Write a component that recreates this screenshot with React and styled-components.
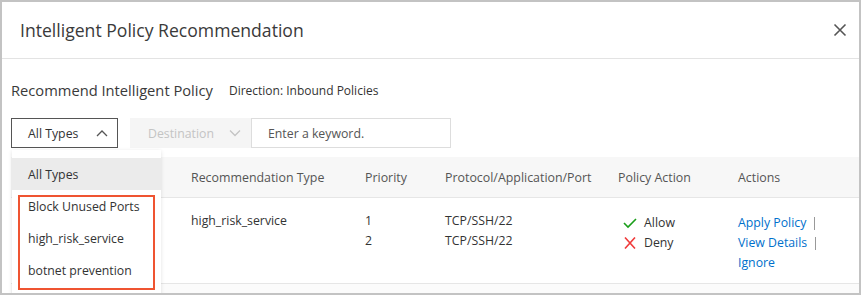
import React from "react";
import styled, { createGlobalStyle } from "styled-components";

const GlobalStyle = createGlobalStyle`
  html, body { margin: 0; padding: 0; background: #fff; }
  body { font-family: "Open Sans", "Noto Sans", Arial, sans-serif; color: #333; }
  * { box-sizing: border-box; }
`;

const Frame = styled.div`
  width: 861px;
  height: 295px;
  border: 2px solid #c3c3c3;
  background: #fff;
  overflow: hidden;
  display: flex;
  flex-direction: column;
`;

const Header = styled.div`
  height: 57px;
  flex: none;
  display: flex;
  align-items: center;
  justify-content: space-between;
  padding: 0 11px 0 18px;
  border-bottom: 1px solid #e3e3e3;
`;

const Title = styled.h1`
  margin: 0;
  font-size: 17.6px;
  font-weight: 400;
  color: #3a3a3a;
`;

const CloseBtn = styled.button`
  width: 16px;
  height: 16px;
  padding: 0;
  border: 0;
  background: none;
  display: flex;
  align-items: center;
  justify-content: center;
`;

const Body = styled.div`
  padding: 21px 0 0 9px;
  display: flex;
  flex-direction: column;
`;

const SectionRow = styled.div`
  display: flex;
  align-items: center;
  gap: 16px;
  height: 20px;
`;

const SectionTitle = styled.span`
  font-size: 14.7px;
  color: #3a3a3a;
`;

const SectionNote = styled.span`
  font-size: 12px;
  color: #333;
`;

const FilterRow = styled.div`
  display: flex;
  align-items: stretch;
  height: 30px;
  margin-top: 18px;
`;

const SelectWrap = styled.div`
  position: relative;
  display: flex;
`;

const Select = styled.div`
  width: ${(p) => p.$w}px;
  height: 30px;
  display: flex;
  align-items: center;
  justify-content: space-between;
  padding: 0 9px 0 ${(p) => p.$pl}px;
  font-size: 12.3px;
  border: 1px solid ${(p) => (p.$disabled ? "#f5f5f5" : "#555")};
  background: ${(p) => (p.$disabled ? "#f5f5f5" : "#fff")};
  color: ${(p) => (p.$disabled ? "#c4c4c4" : "#333")};
  margin-left: ${(p) => p.$ml || 0}px;
`;

const Input = styled.div`
  width: 200px;
  height: 30px;
  border: 1px solid #ddd;
  display: flex;
  align-items: center;
  padding-left: 16px;
  font-size: 12.3px;
  color: #555;
`;

const Menu = styled.div`
  position: absolute;
  top: 32px;
  left: 1px;
  width: 149px;
  height: 160px;
  background: #fff;
  box-shadow: 0 1px 4px rgba(0, 0, 0, 0.12);
  padding-top: 8px;
  z-index: 5;
`;

const MenuItem = styled.div`
  height: 32px;
  display: flex;
  align-items: center;
  padding-left: 16px;
  font-size: 12.3px;
  color: #333;
  background: ${(p) => (p.$active ? "#ebebeb" : "#fff")};
`;

const Highlight = styled.div`
  position: absolute;
  left: 6px;
  top: 45px;
  width: 137px;
  height: 95px;
  border: 2px solid #ef5431;
  pointer-events: none;
`;

const Table = styled.div`
  margin-top: 9px;
  display: flex;
  flex-direction: column;
`;

const cols = "164px 174px 80px 173px 120px 1fr";

const HeadRow = styled.div`
  display: grid;
  grid-template-columns: ${cols};
  height: 41px;
  background: #f7f7f7;
  border-bottom: 1px solid #e6e6e6;
  align-items: center;
`;

const HeadCell = styled.div`
  padding-left: 16px;
  font-size: 12.4px;
  color: #555;
`;

const DataRow = styled.div`
  display: grid;
  grid-template-columns: ${cols};
  height: 86px;
  border-bottom: 1px solid #e6e6e6;
  padding-top: 13px;
`;

const Cell = styled.div`
  padding-left: 16px;
  font-size: 12.3px;
  color: #333;
  display: flex;
  flex-direction: column;
  padding-top: ${(p) => p.$pt || 0}px;
`;

const Line = styled.div`
  height: 20px;
  line-height: 20px;
  display: flex;
  align-items: center;
  white-space: nowrap;
`;

const ActionLine = styled(Line)`
  gap: 7px;
  padding-left: 5px;
`;

const LinkLine = styled(Line)`
  gap: 8px;
`;

const Link = styled.a`
  color: #0070cc;
  text-decoration: none;
  font-size: 12.3px;
`;

const Sep = styled.span`
  width: 1px;
  height: 13px;
  background: #999;
`;

const NextRow = styled.div`
  height: 12px;
  background: #fbfbfb;
`;

const Chevron = ({ up, color }) => (
  <svg width="12" height="8" viewBox="0 0 12 8">
    <polyline
      points={up ? "1,7 6,2 11,7" : "1,1.5 6,6.5 11,1.5"}
      fill="none"
      stroke={color}
      strokeWidth="1.3"
    />
  </svg>
);

const CheckIcon = () => (
  <svg width="14" height="12" viewBox="0 0 14 12">
    <polyline points="1,6 5,10 13,2" fill="none" stroke="#1a9e1a" strokeWidth="1.6" />
  </svg>
);

const CrossIcon = () => (
  <svg width="14" height="12" viewBox="0 0 14 12">
    <path d="M2 0.5 L12 11.5 M12 0.5 L2 11.5" stroke="#f03b3b" strokeWidth="1.6" fill="none" />
  </svg>
);

export default function App() {
  return (
    <>
      <GlobalStyle />
      <Frame>
        <Header>
          <Title>Intelligent Policy Recommendation</Title>
          <CloseBtn aria-label="close">
            <svg width="14" height="14" viewBox="0 0 14 14">
              <path d="M1.5 1.5 L12.5 12.5 M12.5 1.5 L1.5 12.5" stroke="#555" strokeWidth="1.6" />
            </svg>
          </CloseBtn>
        </Header>
        <Body>
          <SectionRow>
            <SectionTitle>Recommend Intelligent Policy</SectionTitle>
            <SectionNote>Direction: Inbound Policies</SectionNote>
          </SectionRow>
          <FilterRow>
            <SelectWrap>
              <Select $w={107} $pl={16}>
                All Types
                <Chevron up color="#555" />
              </Select>
              <Menu>
                <MenuItem $active>All Types</MenuItem>
                <MenuItem>Block Unused Ports</MenuItem>
                <MenuItem>high_risk_service</MenuItem>
                <MenuItem>botnet prevention</MenuItem>
                <Highlight />
              </Menu>
            </SelectWrap>
            <Select $w={121} $pl={17} $ml={12} $disabled>
              Destination
              <Chevron color="#c4c4c4" />
            </Select>
            <Input>Enter a keyword.</Input>
          </FilterRow>
          <Table>
            <HeadRow>
              <HeadCell />
              <HeadCell>Recommendation Type</HeadCell>
              <HeadCell>Priority</HeadCell>
              <HeadCell>Protocol/Application/Port</HeadCell>
              <HeadCell>Policy Action</HeadCell>
              <HeadCell>Actions</HeadCell>
            </HeadRow>
            <DataRow>
              <Cell />
              <Cell>
                <Line>high_risk_service</Line>
              </Cell>
              <Cell>
                <Line>1</Line>
                <Line>2</Line>
              </Cell>
              <Cell>
                <Line>TCP/SSH/22</Line>
                <Line>TCP/SSH/22</Line>
              </Cell>
              <Cell $pt={2}>
                <ActionLine>
                  <CheckIcon />
                  Allow
                </ActionLine>
                <ActionLine>
                  <CrossIcon />
                  Deny
                </ActionLine>
              </Cell>
              <Cell $pt={2}>
                <LinkLine>
                  <Link href="#">Apply Policy</Link>
                  <Sep />
                </LinkLine>
                <LinkLine>
                  <Link href="#">View Details</Link>
                  <Sep />
                </LinkLine>
                <LinkLine>
                  <Link href="#">Ignore</Link>
                </LinkLine>
              </Cell>
            </DataRow>
            <NextRow />
          </Table>
        </Body>
      </Frame>
    </>
  );
}
